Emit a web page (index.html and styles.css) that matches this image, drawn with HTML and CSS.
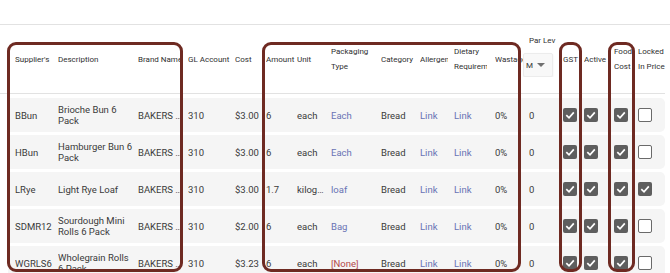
FILE: index.html
```html
<!DOCTYPE html>
<html lang="en">
<head>
    <meta charset="UTF-8">
    <title>Products</title>
    <link rel="stylesheet" href="styles.css">
</head>
<body>
    <div class="topbar"></div>
    <div class="grid-wrap">
        <div class="row head">
            <div class="cell">Supplier's</div>
            <div class="cell">Description</div>
            <div class="cell nowrap">Brand Name</div>
            <div class="cell">GL Account</div>
            <div class="cell">Cost</div>
            <div class="cell">Amount</div>
            <div class="cell">Unit</div>
            <div class="cell">Packaging Type</div>
            <div class="cell">Category</div>
            <div class="cell nowrap allergens">Allergens</div>
            <div class="cell dietary">Dietary Requirements</div>
            <div class="cell nowrap">Wastage</div>
            <div class="cell par-head">
                <span class="par-label">Par Lev</span>
                <div class="select">
                    <span class="select-value">Mon</span>
                    <span class="caret"></span>
                </div>
            </div>
            <div class="cell">GST</div>
            <div class="cell">Active</div>
            <div class="cell">Food Cost</div>
            <div class="cell last">Locked<br>In Price</div>
        </div>

        <div class="rows">
            <div class="row item">
                <div class="cell">BBun</div>
                <div class="cell desc">Brioche Bun 6 Pack</div>
                <div class="cell">BAKERS …</div>
                <div class="cell">310</div>
                <div class="cell">$3.00</div>
                <div class="cell">6</div>
                <div class="cell">each</div>
                <div class="cell link">Each</div>
                <div class="cell">Bread</div>
                <div class="cell link">Link</div>
                <div class="cell link">Link</div>
                <div class="cell">0%</div>
                <div class="cell par">0</div>
                <div class="cell"><span class="box on"></span></div>
                <div class="cell"><span class="box on"></span></div>
                <div class="cell"><span class="box on"></span></div>
                <div class="cell"><span class="box"></span></div>
            </div>
            <div class="row item">
                <div class="cell">HBun</div>
                <div class="cell desc">Hamburger Bun 6 Pack</div>
                <div class="cell">BAKERS …</div>
                <div class="cell">310</div>
                <div class="cell">$3.00</div>
                <div class="cell">6</div>
                <div class="cell">each</div>
                <div class="cell link">Each</div>
                <div class="cell">Bread</div>
                <div class="cell link">Link</div>
                <div class="cell link">Link</div>
                <div class="cell">0%</div>
                <div class="cell par">0</div>
                <div class="cell"><span class="box on"></span></div>
                <div class="cell"><span class="box on"></span></div>
                <div class="cell"><span class="box on"></span></div>
                <div class="cell"><span class="box"></span></div>
            </div>
            <div class="row item">
                <div class="cell">LRye</div>
                <div class="cell desc">Light Rye Loaf</div>
                <div class="cell">BAKERS …</div>
                <div class="cell">310</div>
                <div class="cell">$3.00</div>
                <div class="cell">1.7</div>
                <div class="cell">kilog…</div>
                <div class="cell link">loaf</div>
                <div class="cell">Bread</div>
                <div class="cell link">Link</div>
                <div class="cell link">Link</div>
                <div class="cell">0%</div>
                <div class="cell par">0</div>
                <div class="cell"><span class="box on"></span></div>
                <div class="cell"><span class="box on"></span></div>
                <div class="cell"><span class="box on"></span></div>
                <div class="cell"><span class="box on"></span></div>
            </div>
            <div class="row item">
                <div class="cell">SDMR12</div>
                <div class="cell desc">Sourdough Mini Rolls 6 Pack</div>
                <div class="cell">BAKERS …</div>
                <div class="cell">310</div>
                <div class="cell">$2.00</div>
                <div class="cell">6</div>
                <div class="cell">each</div>
                <div class="cell link">Bag</div>
                <div class="cell">Bread</div>
                <div class="cell link">Link</div>
                <div class="cell link">Link</div>
                <div class="cell">0%</div>
                <div class="cell par">0</div>
                <div class="cell"><span class="box on"></span></div>
                <div class="cell"><span class="box on"></span></div>
                <div class="cell"><span class="box on"></span></div>
                <div class="cell"><span class="box"></span></div>
            </div>
            <div class="row item">
                <div class="cell">WGRLS6</div>
                <div class="cell desc">Wholegrain Rolls 6 Pack</div>
                <div class="cell">BAKERS …</div>
                <div class="cell">310</div>
                <div class="cell">$3.23</div>
                <div class="cell">6</div>
                <div class="cell">each</div>
                <div class="cell none">[None]</div>
                <div class="cell">Bread</div>
                <div class="cell link">Link</div>
                <div class="cell link">Link</div>
                <div class="cell">0%</div>
                <div class="cell par">0</div>
                <div class="cell"><span class="box on"></span></div>
                <div class="cell"><span class="box on"></span></div>
                <div class="cell"><span class="box on"></span></div>
                <div class="cell"><span class="box"></span></div>
            </div>
        </div>

        <!-- annotation outlines drawn over the table -->
        <div class="mark mark-supplier"></div>
        <div class="mark mark-amount"></div>
        <div class="mark mark-gst"></div>
        <div class="mark mark-food"></div>
    </div>
</body>
</html>
```

FILE: styles.css
```css
:root {
    --text-color: #3a3a3a;
    --head-color: #303030;
    --row-bg: #f5f5f5;
    --line-color: #e2e2e2;
    --link-color: #6873b4;
    --none-color: #b4474a;
    --mark-color: #6e2a22;
    --box-color: #5e5e5e;
}

* {
    margin: 0;
    padding: 0;
    box-sizing: border-box;
}

body {
    font-family: Roboto, "Liberation Sans", sans-serif;
    background-color: #ffffff;
    color: var(--text-color);
    width: 670px;
    height: 273px;
    overflow: hidden;
}

.topbar {
    height: 25px;
    border-bottom: 1px solid var(--line-color);
}

.grid-wrap {
    position: relative;
}

.row {
    display: grid;
    grid-template-columns: 43px 80px 50px 47px 31px 31px 34px 50px 39px 34px 41px 28px 40px 21px 30px 24px 27px;
    align-items: center;
    margin-left: 8px;
    width: 657px;
    padding-left: 7px;
}

.cell {
    min-width: 0;
    overflow: hidden;
}

/* header */
.head {
    height: 69px;
    border-bottom: 1px solid var(--line-color);
    margin-left: 0;
    width: 665px;
    padding-left: 15px;
    font-size: 8px;
    line-height: 15px;
    color: var(--head-color);
}

.head .cell {
    padding-right: 2px;
}

.head .nowrap {
    white-space: nowrap;
}

.head .allergens {
    width: 28px;
    padding-right: 0;
}

.head .dietary {
    width: 33px;
    padding-right: 0;
}

.head .last {
    overflow: visible;
    white-space: nowrap;
}

.par-head {
    align-self: start;
    padding-top: 8px;
    display: flex;
    flex-direction: column;
}

.par-label {
    padding-left: 6px;
    white-space: nowrap;
}

.select {
    margin-top: 5px;
    width: 30px;
    height: 24px;
    display: flex;
    align-items: center;
    background-color: #f8f8f8;
    border: 1px solid #ececec;
    border-radius: 2px;
    box-shadow: 0 1px 2px rgba(0, 0, 0, 0.08);
    overflow: hidden;
}

.select-value {
    width: 9px;
    padding-left: 2px;
    overflow: hidden;
    white-space: nowrap;
}

.caret {
    margin-left: 4px;
    width: 0;
    height: 0;
    border-left: 4px solid transparent;
    border-right: 4px solid transparent;
    border-top: 4px solid #707070;
}

/* body rows */
.rows {
    padding-top: 4px;
    display: flex;
    flex-direction: column;
    gap: 3px;
}

.item {
    height: 34px;
    background-color: var(--row-bg);
    border-radius: 2px 5px 5px 2px;
    font-size: 9.5px;
    line-height: 11px;
}

.item .cell {
    white-space: nowrap;
}

.item .desc {
    white-space: normal;
    padding-right: 3px;
}

.link {
    color: var(--link-color);
}

.none {
    color: var(--none-color);
}

.par {
    padding-left: 6px;
}

.box {
    display: block;
    width: 14px;
    height: 14px;
    border: 1.5px solid #6a6a6a;
    border-radius: 2px;
    background-color: #ffffff;
}

.box.on {
    border: none;
    background-color: var(--box-color);
    background-image: url("data:image/svg+xml,%3Csvg xmlns='http://www.w3.org/2000/svg' width='14' height='14'%3E%3Cpolyline points='3.3,7.2 6,9.8 10.8,4.4' fill='none' stroke='white' stroke-width='1.7'/%3E%3C/svg%3E");
}

/* red annotation outlines */
.mark {
    position: absolute;
    top: 17px;
    height: 230px;
    border: 3px solid var(--mark-color);
    border-radius: 9px;
    pointer-events: none;
}

.mark-supplier {
    left: 7px;
    width: 176px;
}

.mark-amount {
    left: 262px;
    width: 259px;
}

.mark-gst {
    left: 559px;
    width: 23px;
}

.mark-food {
    left: 608px;
    width: 27px;
}
```
